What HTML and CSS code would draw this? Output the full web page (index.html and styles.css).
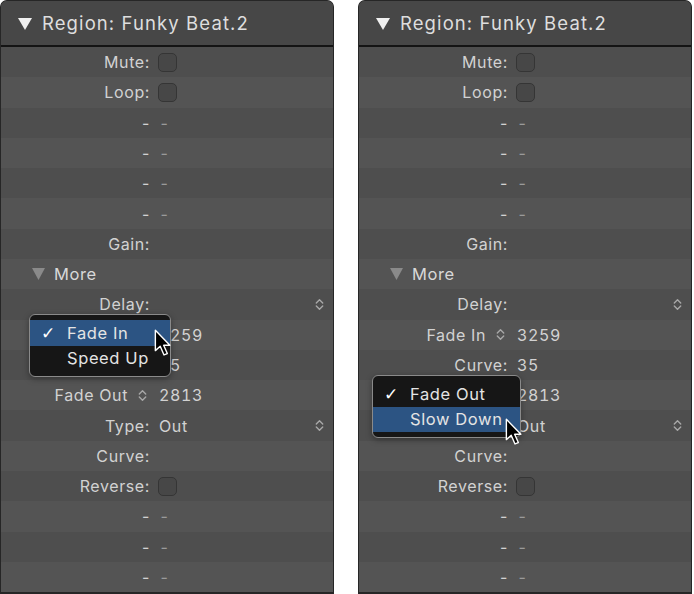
FILE: index.html
```html
<!DOCTYPE html>
<html>
<head>
<meta charset="utf-8">
<link rel="stylesheet" href="styles.css">
</head>
<body>
<div class="wrap">
  <section class="panel">
    <header class="head"><svg class="tri" viewBox="0 0 14 12"><path d="M0 0 H14 L7 12 Z"/></svg><span class="title">Region: Funky Beat.2</span></header>
    <div class="rows">
      <div class="row"><span class="lbl">Mute:</span><span class="val"><span class="cb"></span></span></div>
      <div class="row"><span class="lbl">Loop:</span><span class="val"><span class="cb"></span></span></div>
      <div class="row"><span class="lbl">-</span><span class="val dim">-</span></div>
      <div class="row"><span class="lbl">-</span><span class="val dim">-</span></div>
      <div class="row"><span class="lbl">-</span><span class="val dim">-</span></div>
      <div class="row"><span class="lbl">-</span><span class="val dim">-</span></div>
      <div class="row"><span class="lbl">Gain:</span><span class="val"></span></div>
      <div class="row more"><svg class="mtri" viewBox="0 0 13 12"><path d="M0 0 H13 L6.5 12 Z"/></svg><span class="mtxt">More</span></div>
      <div class="row"><span class="lbl">Delay:</span><span class="val"></span><svg class="chev" viewBox="0 0 8 14"><path d="M1 5.5 L4 2.5 L7 5.5 M1 8.5 L4 11.5 L7 8.5"/></svg></div>
      <div class="row"><span class="lbl">Fade In <svg class="chev in" viewBox="0 0 8 14"><path d="M1 5.5 L4 2.5 L7 5.5 M1 8.5 L4 11.5 L7 8.5"/></svg></span><span class="val">3259</span></div>
      <div class="row"><span class="lbl">Curve:</span><span class="val">35</span></div>
      <div class="row"><span class="lbl">Fade Out <svg class="chev in" viewBox="0 0 8 14"><path d="M1 5.5 L4 2.5 L7 5.5 M1 8.5 L4 11.5 L7 8.5"/></svg></span><span class="val">2813</span></div>
      <div class="row"><span class="lbl">Type:</span><span class="val">Out</span><svg class="chev" viewBox="0 0 8 14"><path d="M1 5.5 L4 2.5 L7 5.5 M1 8.5 L4 11.5 L7 8.5"/></svg></div>
      <div class="row"><span class="lbl">Curve:</span><span class="val"></span></div>
      <div class="row"><span class="lbl">Reverse:</span><span class="val"><span class="cb"></span></span></div>
      <div class="row"><span class="lbl">-</span><span class="val dim">-</span></div>
      <div class="row"><span class="lbl">-</span><span class="val dim">-</span></div>
      <div class="row"><span class="lbl">-</span><span class="val dim">-</span></div>
    </div>
    <div class="menu menu-left">
      <div class="item sel"><span class="chk">✓</span>Fade In</div>
      <div class="item"><span class="chk"></span>Speed Up</div>
    </div>
    <svg class="cursor cur-left" viewBox="0 0 14 22"><path d="M1 1 L1 17 L4.8 13.6 L7.8 20.4 L10.4 19.3 L7.5 12.8 L12.4 12.8 Z"/></svg>
  </section>

  <section class="panel">
    <header class="head"><svg class="tri" viewBox="0 0 14 12"><path d="M0 0 H14 L7 12 Z"/></svg><span class="title">Region: Funky Beat.2</span></header>
    <div class="rows">
      <div class="row"><span class="lbl">Mute:</span><span class="val"><span class="cb"></span></span></div>
      <div class="row"><span class="lbl">Loop:</span><span class="val"><span class="cb"></span></span></div>
      <div class="row"><span class="lbl">-</span><span class="val dim">-</span></div>
      <div class="row"><span class="lbl">-</span><span class="val dim">-</span></div>
      <div class="row"><span class="lbl">-</span><span class="val dim">-</span></div>
      <div class="row"><span class="lbl">-</span><span class="val dim">-</span></div>
      <div class="row"><span class="lbl">Gain:</span><span class="val"></span></div>
      <div class="row more"><svg class="mtri" viewBox="0 0 13 12"><path d="M0 0 H13 L6.5 12 Z"/></svg><span class="mtxt">More</span></div>
      <div class="row"><span class="lbl">Delay:</span><span class="val"></span><svg class="chev" viewBox="0 0 8 14"><path d="M1 5.5 L4 2.5 L7 5.5 M1 8.5 L4 11.5 L7 8.5"/></svg></div>
      <div class="row"><span class="lbl">Fade In <svg class="chev in" viewBox="0 0 8 14"><path d="M1 5.5 L4 2.5 L7 5.5 M1 8.5 L4 11.5 L7 8.5"/></svg></span><span class="val">3259</span></div>
      <div class="row"><span class="lbl">Curve:</span><span class="val">35</span></div>
      <div class="row"><span class="lbl">Fade Out <svg class="chev in" viewBox="0 0 8 14"><path d="M1 5.5 L4 2.5 L7 5.5 M1 8.5 L4 11.5 L7 8.5"/></svg></span><span class="val">2813</span></div>
      <div class="row"><span class="lbl">Type:</span><span class="val">Out</span><svg class="chev" viewBox="0 0 8 14"><path d="M1 5.5 L4 2.5 L7 5.5 M1 8.5 L4 11.5 L7 8.5"/></svg></div>
      <div class="row"><span class="lbl">Curve:</span><span class="val"></span></div>
      <div class="row"><span class="lbl">Reverse:</span><span class="val"><span class="cb"></span></span></div>
      <div class="row"><span class="lbl">-</span><span class="val dim">-</span></div>
      <div class="row"><span class="lbl">-</span><span class="val dim">-</span></div>
      <div class="row"><span class="lbl">-</span><span class="val dim">-</span></div>
    </div>
    <div class="menu menu-right">
      <div class="item"><span class="chk">✓</span>Fade Out</div>
      <div class="item sel"><span class="chk"></span>Slow Down</div>
    </div>
    <svg class="cursor cur-right" viewBox="0 0 14 22"><path d="M1 1 L1 17 L4.8 13.6 L7.8 20.4 L10.4 19.3 L7.5 12.8 L12.4 12.8 Z"/></svg>
  </section>
</div>
</body>
</html>
```

FILE: styles.css
```css
html, body {
  margin: 0;
  padding: 0;
  background: #ffffff;
}
body {
  font-family: "Inter", "Liberation Sans", sans-serif;
  -webkit-font-smoothing: antialiased;
}
.wrap {
  display: flex;
  gap: 24px;
  width: 694px;
  height: 594px;
}
.panel {
  position: relative;
  box-sizing: border-box;
  width: 334px;
  height: 594px;
  border: 1px solid #262626;
  border-bottom-width: 2px;
  border-radius: 7px 7px 0 0;
  background: #505050;
  display: flex;
  flex-direction: column;
  overflow: hidden;
}
.head {
  box-sizing: border-box;
  height: 46px;
  flex: none;
  background: #474747;
  border-bottom: 2px solid #141414;
  display: flex;
  align-items: center;
  padding-left: 17px;
  color: #dedede;
  font-size: 18.5px;
}
.tri {
  width: 14px;
  height: 12px;
  margin-right: 10px;
  margin-top: 1px;
  flex: none;
}
.tri path {
  fill: #f0f0f0;
}
.title {
  letter-spacing: 1.1px;
}
.rows {
  flex: 1;
  display: flex;
  flex-direction: column;
}
.row {
  flex: 1;
  display: flex;
  align-items: center;
  font-size: 16px;
  letter-spacing: 0.6px;
  color: #d2d2d2;
  position: relative;
}
.row:nth-child(odd) { background: #4e4e4e; }
.row:nth-child(even) { background: #545454; }
.lbl {
  width: 149px;
  flex: none;
  text-align: right;
  display: flex;
  justify-content: flex-end;
  align-items: center;
}
.val {
  margin-left: 9px;
  flex: 1;
  display: flex;
  align-items: center;
  font-feature-settings: "tnum" 1;
}
.dim {
  color: #9a9a9a;
}
.cb {
  box-sizing: border-box;
  width: 19px;
  height: 19px;
  margin-left: -1px;
  border-radius: 5px;
  background: #474747;
  border: 1px solid #353535;
}
.chev {
  width: 9px;
  height: 15px;
  flex: none;
  margin-right: 9px;
}
.chev.in {
  margin-left: 10px;
  margin-right: 3px;
}
.chev path {
  fill: none;
  stroke: #a8a8a8;
  stroke-width: 1.3;
  stroke-linecap: round;
  stroke-linejoin: round;
}
.more {
  padding-left: 31px;
}
.mtri {
  width: 13px;
  height: 12px;
  margin-right: 9px;
  flex: none;
}
.mtri path {
  fill: #8a8a8a;
}
.mtxt {
  font-size: 16.5px;
  color: #d8d8d8;
}
.menu {
  position: absolute;
  box-sizing: border-box;
  background: #161616;
  border: 1px solid #8a8a8a;
  border-radius: 6px;
  padding: 5px 0 5px;
  box-shadow: 0 2px 6px rgba(0,0,0,0.35);
}
.menu-left {
  left: 28px;
  top: 313px;
  width: 142px;
}
.menu-right {
  left: 13px;
  top: 374px;
  width: 149px;
}
.item {
  height: 25.5px;
  display: flex;
  align-items: center;
  font-size: 16.5px;
  letter-spacing: 0.6px;
  color: #e4e4e4;
}
.item.sel {
  background: #2c5483;
}
.chk {
  width: 37px;
  padding-left: 11px;
  box-sizing: border-box;
  font-family: "DejaVu Sans", sans-serif;
  font-size: 17px;
  letter-spacing: 0;
  color: #ffffff;
}
.cursor {
  position: absolute;
  width: 18px;
  height: 28px;
}
.cursor path {
  fill: #000000;
  stroke: #ffffff;
  stroke-width: 1.1;
  stroke-linejoin: round;
}
.cur-left {
  left: 153px;
  top: 328px;
}
.cur-right {
  left: 146px;
  top: 417px;
}
```
